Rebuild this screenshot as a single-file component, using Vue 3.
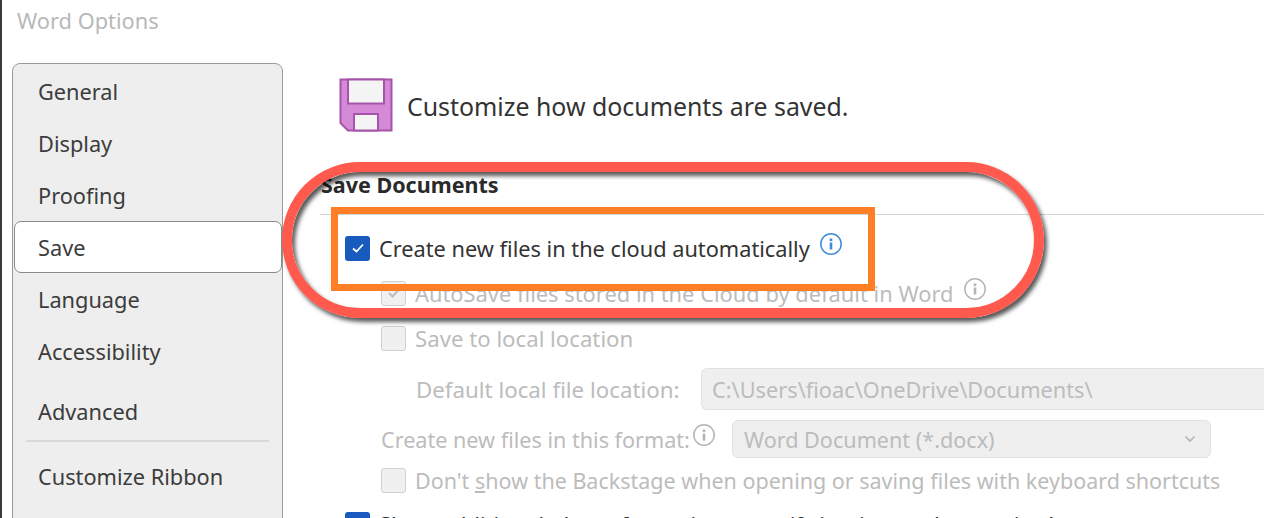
<template>
  <div class="window">
    <div class="title">Word Options</div>
    <div class="body">
      <nav class="sidebar">
        <div
          v-for="item in navItems"
          :key="item.label"
          :class="['nav-item', { active: item.active, gap: item.gap }]"
        >
          {{ item.label }}
        </div>
        <div class="nav-divider"></div>
        <div class="nav-item">Customize Ribbon</div>
      </nav>

      <main class="content">
        <div class="header">
          <svg class="save-icon" width="54" height="54" viewBox="0 0 54 54">
            <path d="M1.5 1.5H52.5V52.5H9L1.5 45Z" fill="#d48ad6" stroke="#a653aa" stroke-width="2" />
            <rect x="9" y="1.5" width="36" height="24" fill="#f4f4f4" stroke="#a653aa" stroke-width="2" />
            <rect x="15" y="36" width="24" height="16.5" fill="#f4f4f4" stroke="#a653aa" stroke-width="2" />
          </svg>
          <span>Customize how documents are saved.</span>
        </div>

        <div class="section-title">Save Documents</div>
        <div class="section-line"></div>

        <div class="row row-cloud">
          <span class="check on">
            <svg width="14" height="12" viewBox="0 0 14 12"><path d="M2 6.5L5.5 9.5L12 2.5" fill="none" stroke="#fff" stroke-width="1.8" /></svg>
          </span>
          <span class="label">Create new files in the cloud automatically</span>
          <svg class="info blue" width="24" height="24" viewBox="0 0 24 24">
            <circle cx="12" cy="12" r="10.2" fill="none" stroke="currentColor" stroke-width="1.5" />
            <rect x="10.7" y="6.5" width="2.6" height="2.6" fill="currentColor" />
            <rect x="10.7" y="10.5" width="2.6" height="7" fill="currentColor" />
          </svg>
        </div>

        <div class="disabled">
          <div class="row row-autosave">
            <span class="check off">
              <svg width="14" height="12" viewBox="0 0 14 12"><path d="M2 6L5.5 9.5L12 2.5" fill="none" stroke="#bdbdbd" stroke-width="2" /></svg>
            </span>
            <span class="label">AutoSave files stored in the Cloud by default in Word</span>
            <svg class="info" width="24" height="24" viewBox="0 0 24 24">
              <circle cx="12" cy="12" r="10.2" fill="none" stroke="currentColor" stroke-width="1.5" />
              <rect x="10.7" y="6.5" width="2.6" height="2.6" fill="currentColor" />
              <rect x="10.7" y="10.5" width="2.6" height="7" fill="currentColor" />
            </svg>
          </div>
          <div class="row row-local">
            <span class="check off"></span>
            <span class="label">Save to local location</span>
          </div>
          <div class="row row-location">
            <span class="location-label">Default local f<u>i</u>le location:</span>
            <div class="field path">C:\Users\fioac\OneDrive\Documents\</div>
          </div>
          <div class="row row-format">
            <span class="format-label">Create new files in this format:</span>
            <svg class="info" width="24" height="24" viewBox="0 0 24 24">
              <circle cx="12" cy="12" r="10.2" fill="none" stroke="currentColor" stroke-width="1.5" />
              <rect x="10.7" y="6.5" width="2.6" height="2.6" fill="currentColor" />
              <rect x="10.7" y="10.5" width="2.6" height="7" fill="currentColor" />
            </svg>
            <div class="field select">
              <span>Word Document (*.docx)</span>
              <svg width="12" height="8" viewBox="0 0 12 8"><path d="M1.5 1.5L6 6L10.5 1.5" fill="none" stroke="#b5b5b5" stroke-width="1.6" /></svg>
            </div>
          </div>
          <div class="row row-backstage">
            <span class="check off"></span>
            <span class="label">Don't <u>s</u>how the Backstage when opening or saving files with keyboard shortcuts</span>
          </div>
        </div>

        <div class="row row-last">
          <span class="check on"></span>
          <span class="label">Show additional places for saving, even if sign-in may be required.</span>
        </div>

        <div class="mark-pill"></div>
        <div class="mark-box"></div>
      </main>
    </div>
  </div>
</template>

<script setup>
const navItems = [
  { label: 'General' },
  { label: 'Display' },
  { label: 'Proofing' },
  { label: 'Save', active: true },
  { label: 'Language' },
  { label: 'Accessibility' },
  { label: 'Advanced', gap: true },
]
</script>

<style scoped>
.window {
  width: 1264px;
  height: 518px;
  box-sizing: border-box;
  border-left: 2px solid #3a3a3a;
  background: #fff;
  overflow: hidden;
  font-family: "Noto Sans", "Open Sans", sans-serif;
  font-size: 21.75px;
  color: #333;
}

.title {
  height: 63px;
  box-sizing: border-box;
  padding: 4px 0 0 15px;
  font-size: 21.8px;
  line-height: 34px;
  color: #b8b8b8;
}

.body {
  display: flex;
  height: 455px;
}

.sidebar {
  width: 271px;
  height: 480px;
  margin-left: 10px;
  flex-shrink: 0;
  box-sizing: border-box;
  border: 1px solid #9a9a9a;
  border-radius: 8px;
  background: #eeeeee;
  padding: 1px 0 0 1px;
}

.nav-item {
  height: 52px;
  box-sizing: border-box;
  padding-left: 23px;
  line-height: 52px;
  border: 1px solid transparent;
  color: #3c3c3c;
}

.nav-item.active {
  background: #fff;
  border-color: #8a8a8a;
  border-radius: 7px;
}

.nav-item.gap {
  margin-top: 8px;
}

.nav-divider {
  height: 2px;
  margin: 3px 13px 8px 12px;
  background: #d8d8d8;
}

.content {
  position: relative;
  flex: 1;
  min-width: 0;
  padding-left: 56px;
}

.header {
  display: flex;
  align-items: center;
  gap: 14px;
  margin-top: 15px;
  height: 54px;
  font-size: 24.9px;
}

.header span {
  position: relative;
  top: 1px;
}

.section-title {
  margin: 38px 0 0 -18px;
  height: 30px;
  line-height: 30px;
  font-weight: 700;
  font-size: 21.5px;
  color: #2a2a2a;
}

.section-line {
  height: 1px;
  margin: 14px 0 0 -19px;
  background: #d4d4d4;
}

.row {
  display: flex;
  align-items: center;
}

.check {
  width: 25px;
  height: 25px;
  flex-shrink: 0;
  box-sizing: border-box;
  border-radius: 3px;
  display: flex;
  align-items: center;
  justify-content: center;
  margin-right: 9px;
}

.check.on {
  background: #185abd;
}

.check.off {
  background: #f0f0f0;
  border: 1.5px solid #d0d0d0;
}

.info {
  color: #b5b5b5;
  flex-shrink: 0;
}

.info.blue {
  color: #3f8ad8;
}

.row-cloud {
  margin: 20px 0 0 6px;
  height: 26px;
}

.row-cloud .info {
  margin: -8px 0 0 9px;
}

.disabled {
  margin-left: 42px;
  color: #bcbcbc;
}

.row-autosave {
  margin-top: 19px;
  height: 26px;
  font-size: 21.87px;
}

.row-autosave .info {
  margin: -8px 0 0 9px;
}

.row-local {
  margin-top: 20px;
  height: 25px;
  font-size: 22.2px;
}

.row-location {
  margin-top: 17px;
  height: 42px;
  padding-left: 35px;
}

.location-label {
  width: 285px;
  flex-shrink: 0;
  font-size: 22.3px;
}

.field {
  background: #efefef;
  border: 1px solid #e2e2e2;
  border-radius: 6px;
  box-sizing: border-box;
  height: 100%;
  display: flex;
  align-items: center;
  color: #bcbcbc;
}

.path {
  flex: 1;
  padding-left: 10px;
  border-right: none;
  border-radius: 6px 0 0 6px;
}

.row-format {
  margin-top: 10px;
  height: 38px;
}

.format-label {
  width: 311px;
  flex-shrink: 0;
  white-space: nowrap;
  font-size: 21.6px;
}

.row-format .info {
  margin: -8px 0 0 0;
}

.select {
  width: 479px;
  margin-left: 16px;
  padding: 0 14px 0 11px;
  justify-content: space-between;
  font-size: 21.6px;
}

.row-backstage {
  margin-top: 10px;
  height: 25px;
  font-size: 21.5px;
}

.row-last {
  margin: 18px 0 0 6px;
  height: 26px;
  color: #2a2a2a;
  font-size: 22px;
}

.label {
  white-space: nowrap;
}

.mark-pill {
  position: absolute;
  left: -1px;
  top: 99px;
  width: 762px;
  height: 156px;
  box-sizing: border-box;
  border: 10px solid #ff5a4d;
  border-radius: 78px;
  box-shadow: 3px 4px 4px rgba(0, 0, 0, 0.65), inset 3px 4px 4px rgba(0, 0, 0, 0.65);
  pointer-events: none;
}

.mark-box {
  position: absolute;
  left: 48px;
  top: 144px;
  width: 544px;
  height: 84px;
  box-sizing: border-box;
  border: 7px solid #ff7f27;
  pointer-events: none;
}
</style>

<style>
html, body {
  margin: 0;
  overflow: hidden;
  background: #fff;
}
</style>
